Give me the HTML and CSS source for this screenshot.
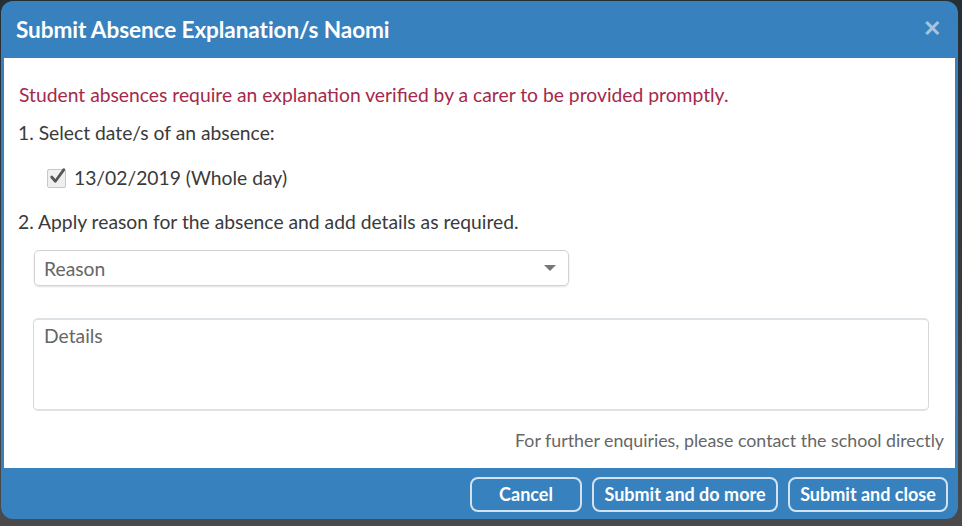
FILE: index.html
```html
<!DOCTYPE html>
<html>
<head>
<meta charset="utf-8">
<link rel="stylesheet" href="styles.css">
</head>
<body>
<div class="dialog">
  <div class="header">
    <h1 class="title">Submit Absence Explanation/s Naomi</h1>
    <span class="close">&#x2715;</span>
  </div>
  <div class="content">
    <p class="warn">Student absences require an explanation verified by a carer to be provided promptly.</p>
    <p class="step">1. Select date/s of an absence:</p>
    <label class="check-row">
      <span class="checkbox">
        <svg width="19" height="19" viewBox="0 0 18 18"><path d="M3.5 9.5 L7 13.5 L15 2.5" fill="none" stroke="#555" stroke-width="2.6" stroke-linecap="round" stroke-linejoin="round"/></svg>
      </span>
      <span>13/02/2019 (Whole day)</span>
    </label>
    <p class="step">2. Apply reason for the absence and add details as required.</p>
    <div class="select">
      <span>Reason</span>
      <span class="caret"></span>
    </div>
    <div class="textarea">Details</div>
    <p class="note">For further enquiries, please contact the school directly</p>
  </div>
  <div class="footer">
    <button class="btn btn-cancel">Cancel</button>
    <button class="btn btn-more">Submit and do more</button>
    <button class="btn btn-close">Submit and close</button>
  </div>
</div>
</body>
</html>
```

FILE: styles.css
```css
html, body {
  margin: 0;
  padding: 0;
}
body {
  width: 962px;
  height: 526px;
  overflow: hidden;
  background: linear-gradient(#262e36, #3a3d40 60%, #4a4a4a);
  font-family: Lato, "Open Sans", sans-serif;
}
.dialog {
  margin: 1px 0 0 1px;
  width: 957px;
  height: 518px;
  border-radius: 12px;
  background: #3781be;
  display: flex;
  flex-direction: column;
  overflow: hidden;
}
.header {
  height: 57px;
  display: flex;
  align-items: center;
  justify-content: space-between;
  padding: 0 17px 0 15px;
  flex: none;
}
.title {
  margin: 0;
  color: #fff;
  font-size: 22.6px;
  font-weight: 700;
  letter-spacing: -0.1px;
}
.close {
  color: #a6c4df;
  font-size: 22px;
  font-weight: 700;
  margin-top: -4px;
}
.content {
  flex: 1;
  margin: 0 3px;
  background: #fff;
  padding: 25px 11px 0 14px;
  color: #3a3a3a;
  font-size: 19.3px;
}
.content p {
  margin: 0;
}
.warn {
  color: #a5294a;
  line-height: 24px;
  margin-left: 1px !important;
}
.step {
  line-height: 24px;
  margin-top: 14px !important;
}
.check-row {
  display: flex;
  align-items: center;
  gap: 8px;
  margin: 21px 0 0 29px;
  line-height: 24px;
}
.checkbox {
  width: 17px;
  height: 17px;
  border: 1px solid #c8c8c8;
  border-radius: 2px;
  background: #efefef;
  position: relative;
  display: inline-block;
}
.checkbox svg {
  position: absolute;
  left: 0;
  top: -3px;
}
.check-row + .step {
  margin-top: 20px !important;
}
.select {
  margin: 16px 0 0 16px;
  width: 535px;
  border: 1px solid #d2d2d2;
  border-radius: 5px;
  box-shadow: 0 1px 2px rgba(0,0,0,0.12);
  display: flex;
  align-items: center;
  justify-content: space-between;
  padding: 0 12px 0 9px;
  box-sizing: border-box;
  height: 36px;
  color: #666;
}
.caret {
  width: 0;
  height: 0;
  border-left: 6px solid transparent;
  border-right: 6px solid transparent;
  border-top: 6px solid #777;
}
.textarea {
  margin: 32px 0 0 15px;
  width: 896px;
  height: 93px;
  box-sizing: border-box;
  border: 1px solid #d8d8d8;
  border-top: 2px solid #dde2e6;
  border-bottom: 2px solid #dde2e6;
  border-radius: 5px;
  padding: 4px 10px;
  color: #666;
  line-height: 24px;
}
.note {
  text-align: right;
  color: #666;
  font-size: 17.8px;
  margin-top: 17px !important;
  line-height: 24px;
}
.footer {
  height: 51px;
  flex: none;
  display: flex;
  justify-content: flex-end;
  align-items: center;
  gap: 10px;
  padding: 0 10px 0 0;
}
.btn {
  height: 35px;
  border: 2px solid #d3e2ef;
  border-radius: 8px;
  background: transparent;
  color: #fff;
  font-family: Lato, "Open Sans", sans-serif;
  font-weight: 700;
  font-size: 18px;
  padding: 0;
  margin-top: 1px;
}
.btn-cancel { width: 112px; }
.btn-more { width: 186px; }
.btn-close { width: 160px; }
```
